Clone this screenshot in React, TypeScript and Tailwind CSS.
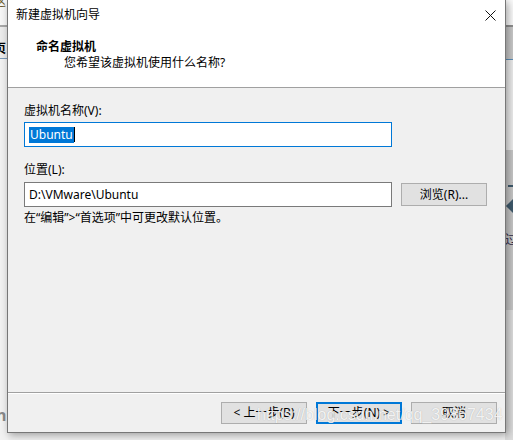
import React from "react";

const font = { fontFamily: '"Noto Sans", "Noto Sans CJK SC", "Liberation Sans", sans-serif' };

export default function App() {
  return (
    <div className="relative w-[513px] h-[440px] overflow-hidden bg-[#f0f0f0]" style={font}>
      {/* background app, left strip */}
      <div className="absolute left-0 top-0 w-[8px] h-[440px] flex flex-col">
        <div className="h-[25px] bg-[#f7f7f7] relative overflow-hidden">
          <span className="absolute left-[-6px] top-[-6px] text-[12px] leading-[16px] text-[#6b5a2e]">这</span>
        </div>
        <div className="h-[2px] bg-[#a8a8a8]" />
        <div className="h-[31px] bg-[#ececec] relative overflow-hidden">
          <span className="absolute left-[-6px] top-[14px] text-[12px] leading-[16px] font-bold text-black">页</span>
        </div>
        <div className="h-px bg-[#7b9ab8]" />
        <div className="flex-1 bg-[#f2f2f2] relative">
          <span className="absolute left-[-4px] top-[348px] text-[16px] leading-[16px] font-bold text-[#8a8a8a]">n</span>
        </div>
      </div>

      {/* background app, right strip */}
      <div className="absolute right-0 top-0 w-[8px] h-[440px] flex flex-col">
        <div className="h-[25px] bg-[#fafafa]" />
        <div className="h-[2px] bg-[#8f8f8f]" />
        <div className="h-[32px] bg-[#c9c9c9]" />
        <div className="h-px bg-[#5b8fba]" />
        <div className="h-[90px] bg-[#ececec]" />
        <div className="h-[160px] bg-[#c6c6c6] relative overflow-hidden">
          <div className="absolute left-[3px] top-[35px] w-[6px] h-[2px] bg-[#3f5a6c]" />
          <div className="absolute left-[3px] top-[51px] w-[10px] h-[10px] rotate-45 bg-[#3f5a6c]" />
          <span className="absolute left-[0px] top-[82px] text-[12px] leading-[16px] text-[#2f2a4a]">过</span>
        </div>
        <div className="flex-1 bg-[#dcdcdc]" />
      </div>

      {/* dialog window */}
      <div className="absolute left-[7px] top-0 w-[499px] h-[433px] flex flex-col border-x border-b border-[#777777] bg-white shadow-[2px_2px_8px_rgba(0,0,0,0.35)] text-[12px] leading-[16px] text-black">
        {/* title bar */}
        <div className="h-[30px] flex items-center justify-between pl-[8px] pr-[9px] bg-white">
          <span className="text-[12px]">新建虚拟机向导</span>
          <svg width="11" height="11" viewBox="0 0 11 11">
            <path d="M0.5 0.5 L10.5 10.5 M10.5 0.5 L0.5 10.5" stroke="#111" strokeWidth="1" fill="none" />
          </svg>
        </div>

        {/* header */}
        <div className="h-[58px] bg-white border-b border-[#a0a0a0] pt-[9px] pl-[28px]">
          <div className="font-bold">命名虚拟机</div>
          <div className="pl-[28px]">您希望该虚拟机使用什么名称?</div>
        </div>

        {/* body */}
        <div className="flex-1 bg-[#f0f0f0] px-[16px] pt-[15px] flex flex-col">
          <div>虚拟机名称(V):</div>
          <div className="mt-[3px] w-[368px] h-[25px] border border-[#0078d7] bg-white flex items-center pl-[4px]">
            <span className="bg-[#0078d7] text-white px-px leading-[16px]">Ubuntu</span>
            <span className="w-px h-[15px] bg-black" />
          </div>

          <div className="mt-[15px]">位置(L):</div>
          <div className="mt-[4px] flex items-start gap-[9px]">
            <div className="w-[368px] h-[25px] border border-[#7a7a7a] bg-white flex items-center pl-[4px]">
              D:\VMware\Ubuntu
            </div>
            <button className="mt-px w-[86px] h-[23px] border border-[#adadad] bg-[#e1e1e1] flex items-center justify-center">
              浏览(R)...
            </button>
          </div>

          <div className="mt-[3px]">在“编辑”&gt;“首选项”中可更改默认位置。</div>
        </div>

        {/* footer separator */}
        <div className="h-px bg-[#a0a0a0]" />
        <div className="h-px bg-white" />

        {/* footer */}
        <div className="h-[38px] bg-[#f0f0f0] flex justify-end items-start pt-[8px] pr-[8px] gap-[9px]">
          <button className="w-[86px] h-[22px] border border-[#adadad] bg-[#e1e1e1] flex items-center justify-center">
            &lt; 上一步(B)
          </button>
          <button className="w-[86px] h-[22px] border-2 border-[#0078d7] bg-[#e1e1e1] flex items-center justify-center">
            下一步(N) &gt;
          </button>
          <button className="w-[86px] h-[22px] border border-[#adadad] bg-[#e1e1e1] flex items-center justify-center">
            取消
          </button>
        </div>
      </div>

      {/* watermark */}
      <div
        className="absolute left-[257px] top-[405px] text-[16px] leading-[20px] text-[rgba(255,255,255,0.85)] [text-shadow:0_0_1px_rgba(0,0,0,0.25)] pointer-events-none whitespace-nowrap"
        style={{ fontFamily: '"Liberation Sans", Arial, sans-serif' }}
      >
        https://blog.csdn.net/qq_39867434
      </div>
    </div>
  );
}
